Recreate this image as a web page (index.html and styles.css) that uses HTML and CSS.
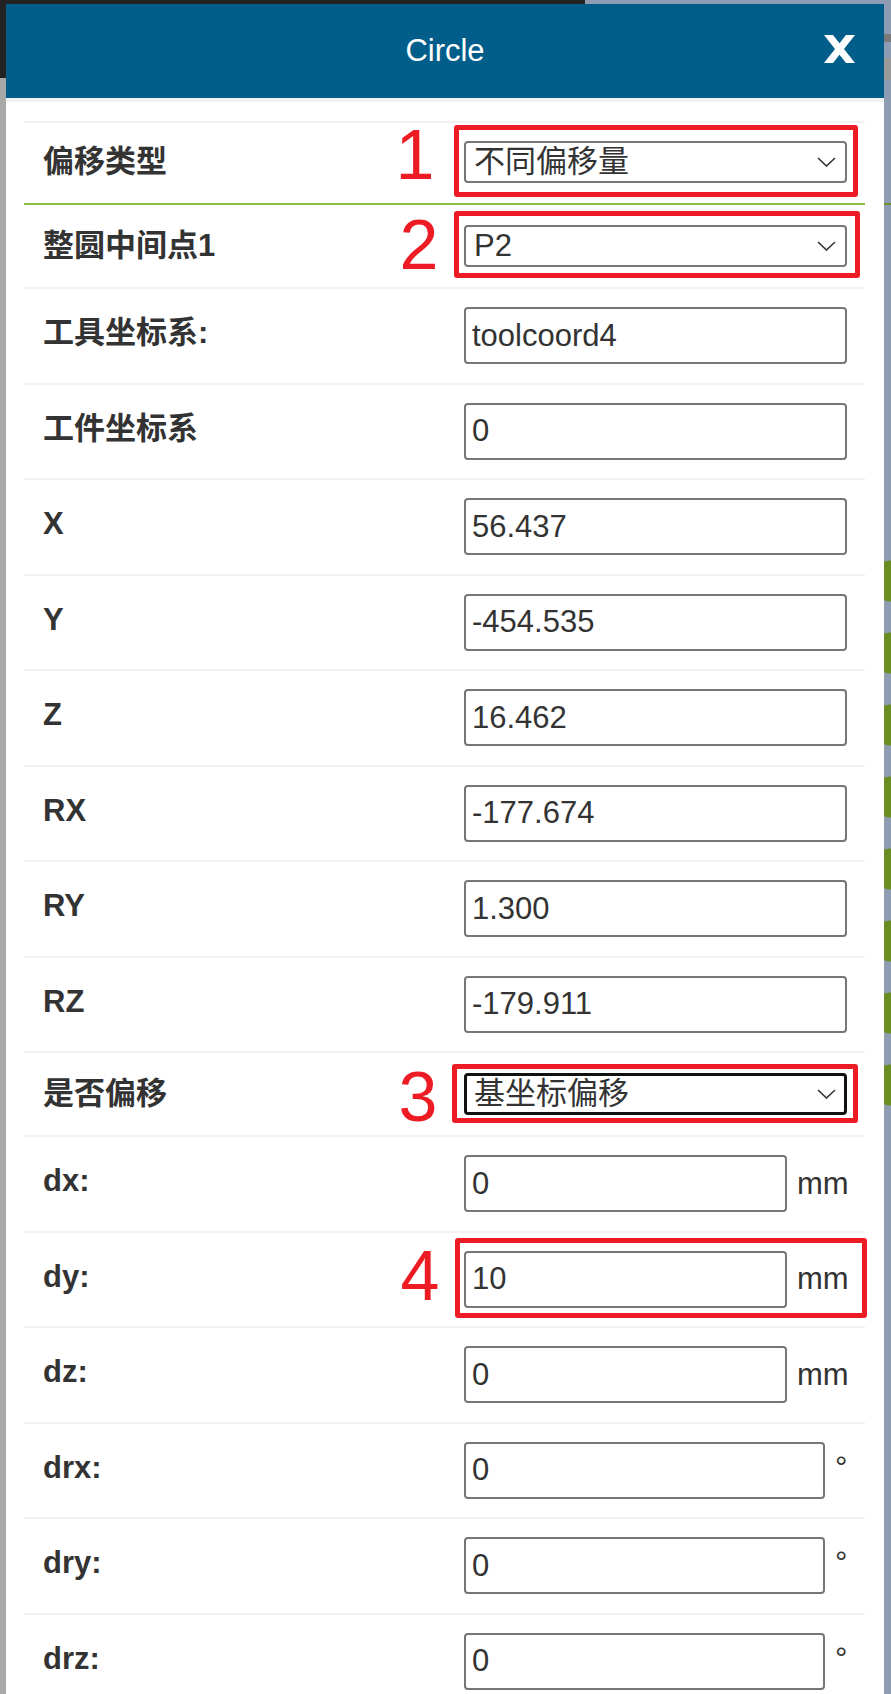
FILE: index.html
```html
<!DOCTYPE html>
<html lang="zh-CN">
<head>
<meta charset="utf-8">
<title>Circle</title>
<link rel="stylesheet" href="styles.css">
</head>
<body>
<div class="topbar"></div>
<div class="modal">
  <header class="modal-header">
    <span></span>
    <h1 class="modal-title">Circle</h1>
    <button class="close" aria-label="close">
      <svg width="31" height="28" viewBox="0 0 31 28"><polygon points="0,0 9,0 31,28 22,28" fill="#fff"/><polygon points="22,0 31,0 9,28 0,28" fill="#fff"/></svg>
    </button>
  </header>
  <div class="form">
    <div class="row row-select row-first">
      <label class="label">偏移类型</label>
      <div class="control">
        <div class="select"><span>不同偏移量</span><svg class="chev" width="19" height="10" viewBox="0 0 19 10"><path d="M1 1 L9.5 9 L18 1" fill="none" stroke="#333" stroke-width="1.6"/></svg></div>
        <span class="mark mark-1"></span><span class="num num-1">1</span>
      </div>
    </div>
    <div class="row row-select row-green">
      <label class="label">整圆中间点1</label>
      <div class="control">
        <div class="select"><span>P2</span><svg class="chev" width="19" height="10" viewBox="0 0 19 10"><path d="M1 1 L9.5 9 L18 1" fill="none" stroke="#333" stroke-width="1.6"/></svg></div>
        <span class="mark mark-2"></span><span class="num num-2">2</span>
      </div>
    </div>
    <div class="row row-input">
      <label class="label">工具坐标系:</label>
      <div class="control"><input class="input" value="toolcoord4"></div>
    </div>
    <div class="row row-input">
      <label class="label">工件坐标系</label>
      <div class="control"><input class="input" value="0"></div>
    </div>
    <div class="row row-input">
      <label class="label">X</label>
      <div class="control"><input class="input" value="56.437"></div>
    </div>
    <div class="row row-input">
      <label class="label">Y</label>
      <div class="control"><input class="input" value="-454.535"></div>
    </div>
    <div class="row row-input">
      <label class="label">Z</label>
      <div class="control"><input class="input" value="16.462"></div>
    </div>
    <div class="row row-input">
      <label class="label">RX</label>
      <div class="control"><input class="input" value="-177.674"></div>
    </div>
    <div class="row row-input">
      <label class="label">RY</label>
      <div class="control"><input class="input" value="1.300"></div>
    </div>
    <div class="row row-input">
      <label class="label">RZ</label>
      <div class="control"><input class="input" value="-179.911"></div>
    </div>
    <div class="row row-select row-offset">
      <label class="label">是否偏移</label>
      <div class="control">
        <div class="select select-focus"><span>基坐标偏移</span><svg class="chev" width="19" height="10" viewBox="0 0 19 10"><path d="M1 1 L9.5 9 L18 1" fill="none" stroke="#333" stroke-width="1.6"/></svg></div>
        <span class="mark mark-3"></span><span class="num num-3">3</span>
      </div>
    </div>
    <div class="row row-input">
      <label class="label">dx:</label>
      <div class="control"><input class="input input-mm" value="0"><span class="unit">mm</span></div>
    </div>
    <div class="row row-input">
      <label class="label">dy:</label>
      <div class="control"><input class="input input-mm" value="10"><span class="unit">mm</span>
        <span class="mark mark-4"></span><span class="num num-4">4</span>
      </div>
    </div>
    <div class="row row-input">
      <label class="label">dz:</label>
      <div class="control"><input class="input input-mm" value="0"><span class="unit">mm</span></div>
    </div>
    <div class="row row-input">
      <label class="label">drx:</label>
      <div class="control"><input class="input input-deg" value="0"><span class="deg">°</span></div>
    </div>
    <div class="row row-input">
      <label class="label">dry:</label>
      <div class="control"><input class="input input-deg" value="0"><span class="deg">°</span></div>
    </div>
    <div class="row row-input">
      <label class="label">drz:</label>
      <div class="control"><input class="input input-deg" value="0"><span class="deg">°</span></div>
    </div>
  </div>
</div>
</body>
</html>
```
FILE: styles.css
```css
html, body {
  margin: 0;
  padding: 0;
}
body {
  font-family: "Liberation Sans", "Noto Sans CJK SC", sans-serif;
  color: #333;
  background:
    linear-gradient(#232323, #232323) 0 0 / 6px 78px no-repeat,
    linear-gradient(#7a7a7a, #7a7a7a) right 0 top 34px / 7px 8px no-repeat,
    linear-gradient(#9a9a9a, #9a9a9a) right 0 top 58px / 7px 22px no-repeat,
    linear-gradient(#6f8f2a, #6f8f2a) right 0 top 203px / 7px 2px no-repeat,
    linear-gradient(to right, #a9a9a9 0 445px, #8e9db3 445px);
  overflow: hidden;
}
body::after {
  content: "";
  position: fixed;
  right: 0;
  top: 545px;
  width: 7px;
  height: 570px;
  background: radial-gradient(circle at 100% 50%, #6b8e23 0 20px, transparent 21px) 0 0 / 7px 72px repeat-y;
}
.topbar {
  height: 4px;
  background: linear-gradient(to right, #232323 0 585px, #8e9db3 585px);
}
.modal {
  margin-left: 6px;
  width: 878px;
  background: #fff;
  min-height: 1700px;
}
.modal-header {
  height: 94px;
  background: #015e8b;
  border-bottom: 4px solid #f2f2f2;
  display: grid;
  grid-template-columns: 1fr auto 1fr;
  align-items: center;
}
.modal-title {
  margin: 0;
  font-size: 31px;
  font-weight: normal;
  color: #fff;
  line-height: 36px;
}
.close {
  justify-self: end;
  margin-right: 29px;
  padding: 0;
  border: 0;
  background: none;
  display: flex;
  margin-top: -4px;
}
.form {
  padding: 19px 19px 0 18px;
}
.row {
  display: flex;
  border-top: 2px solid #f2f2f2;
  padding: 18px 18px 18.5px 19px;
}
.row-select {
  align-items: center;
  padding-bottom: 20px;
}
.row-green {
  border-top: 2px solid #8cc13f;
  padding-top: 20px;
  padding-bottom: 20px;
}
.row-offset {
  padding-top: 20px;
}
.row-input {
  align-items: flex-start;
}
.label {
  flex: 1;
  font-size: 31px;
  font-weight: bold;
  line-height: 36px;
  color: #333;
}
.row-input .label {
  padding-top: 8px;
}
.control {
  flex: none;
  width: 383px;
  position: relative;
  display: flex;
  align-items: center;
}
.select {
  flex: 1;
  height: 42px;
  box-sizing: border-box;
  border: 2px solid #777;
  border-radius: 4px;
  display: flex;
  align-items: center;
  justify-content: space-between;
  padding: 0 9px 0 8px;
  font-size: 31px;
  line-height: 36px;
  color: #333;
}
.select-focus {
  border: 3px solid #111;
  padding-left: 7px;
  padding-right: 8px;
}
.chev {
  flex: none;
}
.input {
  width: 100%;
  height: 57px;
  box-sizing: border-box;
  border: 2px solid #767676;
  border-radius: 4px;
  padding: 0 6px;
  margin: 0;
  font-family: "Liberation Sans", sans-serif;
  font-size: 31px;
  color: #333;
  background: #fff;
  outline: none;
}
.input-mm {
  width: 323px;
  flex: none;
}
.input-deg {
  width: 361px;
  flex: none;
}
.unit {
  margin-left: 10px;
  font-size: 31px;
  color: #333;
}
.deg {
  margin-left: 10px;
  font-size: 31px;
  color: #333;
  align-self: flex-start;
  margin-top: 8px;
}
.mark {
  position: absolute;
  border: 5px solid #ed1c24;
  border-radius: 3px;
  pointer-events: none;
}
.mark-1 { top: -16px; bottom: -14px; left: -10px; right: -11px; }
.mark-2 { top: -14px; bottom: -11px; left: -10px; right: -13px; }
.mark-3 { top: -9px; bottom: -8px; left: -12px; right: -11px; }
.mark-4 { top: -13px; bottom: -10px; left: -9px; right: -20px; }
.num {
  position: absolute;
  width: 40px;
  text-align: center;
  font-size: 70px;
  line-height: 70px;
  color: #ed1c24;
}
.num-1 { left: -69px; top: -21px; }
.num-2 { left: -65px; top: -15px; }
.num-3 { left: -66px; top: -11px; }
.num-4 { left: -64px; top: -10px; }
```
